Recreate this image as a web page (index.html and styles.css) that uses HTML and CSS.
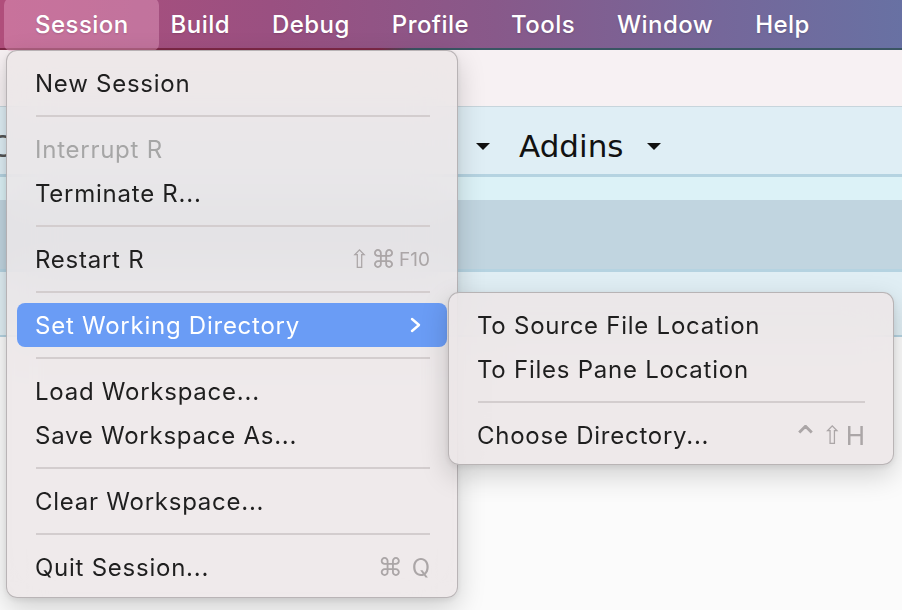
FILE: index.html
```html
<!DOCTYPE html>
<html>
<head>
<meta charset="utf-8">
<link rel="stylesheet" href="styles.css">
</head>
<body>
<div class="screen">
  <nav class="menubar">
    <span class="mb-item active">Session</span>
    <span class="mb-item">Build</span>
    <span class="mb-item">Debug</span>
    <span class="mb-item">Profile</span>
    <span class="mb-item">Tools</span>
    <span class="mb-item">Window</span>
    <span class="mb-item">Help</span>
  </nav>
  <div class="mb-line"></div>
  <div class="titlebar"></div>
  <div class="toolbar">
    <div class="tb-hidden"><span class="tb-text">C</span></div>
    <div class="tb-gap"></div>
    <span class="tri"></span>
    <span class="tb-text addins">Addins</span>
    <span class="tri"></span>
  </div>
  <div class="band band1"></div>
  <div class="band band2"></div>
  <div class="band band3"></div>
  <div class="content"></div>

  <div class="menu main-menu">
    <div class="row">New Session</div>
    <div class="sep"></div>
    <div class="row disabled">Interrupt R</div>
    <div class="row">Terminate R...</div>
    <div class="sep"></div>
    <div class="row">Restart R<span class="sc"><span class="glyph">⇧⌘</span><span class="fk">F10</span></span></div>
    <div class="sep"></div>
    <div class="row hl">Set Working Directory
      <svg class="chev" width="12" height="16" viewBox="0 0 12 16"><polyline points="2,2 9,8 2,14" fill="none" stroke="#fff" stroke-width="2.4" stroke-linecap="round" stroke-linejoin="round"/></svg>
    </div>
    <div class="sep"></div>
    <div class="row">Load Workspace...</div>
    <div class="row">Save Workspace As...</div>
    <div class="sep"></div>
    <div class="row">Clear Workspace...</div>
    <div class="sep"></div>
    <div class="row">Quit Session...<span class="sc"><span class="glyph gap">⌘</span>Q</span></div>
  </div>

  <div class="menu sub-menu">
    <div class="row">To Source File Location</div>
    <div class="row">To Files Pane Location</div>
    <div class="sep"></div>
    <div class="row">Choose Directory...<span class="sc"><span class="glyph ctrl">⌃</span><span class="glyph">⇧</span><span class="hk">H</span></span></div>
  </div>
</div>
</body>
</html>
```

FILE: styles.css
```css
* { box-sizing: border-box; }
html, body { margin: 0; padding: 0; }
body {
  width: 902px;
  height: 610px;
  overflow: hidden;
  background: #fbfbfb;
  font-family: Inter, "Liberation Sans", sans-serif;
}
.screen {
  position: relative;
  width: 902px;
  height: 610px;
  overflow: hidden;
}
.menubar {
  height: 48px;
  display: flex;
  align-items: center;
  padding-left: 14px;
  background: linear-gradient(90deg, #b04e7b 0%, #9a5081 30%, #88598a 55%, #75679a 80%, #6871a3 100%);
}
.mb-item {
  position: relative;
  padding: 0 21px;
  color: #fff;
  font-size: 24px;
  font-weight: 500;
  letter-spacing: 0.45px;
  text-shadow: 0 1px 2px rgba(0,0,0,0.15);
}
.mb-item.active::before {
  content: "";
  position: absolute;
  left: -10px;
  right: -9px;
  top: -12px;
  bottom: -12px;
  border-radius: 7px;
  background: rgba(230, 160, 195, 0.45);
  z-index: -1;
}
.mb-item.active { z-index: 0; }
.mb-line {
  height: 2px;
  background: linear-gradient(90deg, #7d2846 0%, #7d2846 42%, #3a5563 46%, #3a5563 100%);
}
.titlebar {
  height: 57px;
  background: #f7f1f3;
  border-bottom: 1px solid #c7d5dc;
}
.toolbar {
  height: 70px;
  padding-top: 10px;
  background: #dfeef5;
  border-bottom: 3px solid #b5d3e1;
  display: flex;
  align-items: center;
}
.tb-hidden {
  flex: 0 0 7px;
  overflow: hidden;
}
.tb-gap { flex: 0 0 469px; }
.tb-text {
  font-family: "DejaVu Sans", sans-serif;
  font-size: 31px;
  color: #111;
}
.tb-hidden .tb-text { display: block; margin-left: -10px; color: #555; }
.addins { margin: 0 24px 0 29px; }
.tri {
  width: 0;
  height: 0;
  border-left: 7px solid transparent;
  border-right: 7px solid transparent;
  border-top: 7px solid #111;
  margin-top: 2px;
}
.band1 { height: 23px; background: #dcf2f7; }
.band2 { height: 72px; background: #c1d5e0; border-bottom: 3px solid #b5d3e1; }
.band3 { height: 65px; background: #e0eef4; border-bottom: 2px solid #b5d3e1; }
.content { height: 300px; background: #fbfbfb; }

.menu {
  position: absolute;
  padding: 10px 10px 8px;
  border: 1px solid rgba(120, 115, 118, 0.45);
  border-radius: 11px;
  background: rgba(236, 229, 230, 0.82);
  backdrop-filter: blur(24px);
  box-shadow: 0 10px 28px rgba(0,0,0,0.18), 0 2px 6px rgba(0,0,0,0.08);
  color: #1f1f1f;
  font-size: 24px;
  letter-spacing: 0.75px;
}
.main-menu {
  left: 6px;
  top: 50px;
  width: 452px;
  height: 548px;
}
.sub-menu {
  left: 448px;
  top: 292px;
  width: 446px;
  height: 173px;
  background: rgba(236, 230, 231, 0.88);
}
.row {
  height: 44px;
  display: flex;
  align-items: center;
  justify-content: space-between;
  padding: 0 17px 0 18px;
  border-radius: 8px;
  white-space: nowrap;
}
.row.disabled { color: #a6a6a6; }
.row.hl {
  background: #6a9cf5;
  color: #fff;
}
.chev { margin-right: 8px; }
.sep {
  height: 2px;
  margin: 10px 17px 10px 19px;
  background: #d3cdce;
}
.sc {
  color: #aba6a7;
  font-size: 24px;
  letter-spacing: 0;
  display: flex;
  align-items: center;
}
.glyph { font-family: "DejaVu Sans", sans-serif; font-size: 25px; letter-spacing: 1px; }
.glyph.gap { margin-right: 8px; }
.glyph.ctrl { font-size: 34px; margin-top: 6px; margin-right: 1px; }
.fk { font-size: 19px; margin-left: 2px; }
.hk { font-size: 26px; margin-left: 2px; }
.sub-menu .row { padding: 0 18px 0 18px; }
.sub-menu .sep { margin: 10px 18px 10px 19px; }
```
